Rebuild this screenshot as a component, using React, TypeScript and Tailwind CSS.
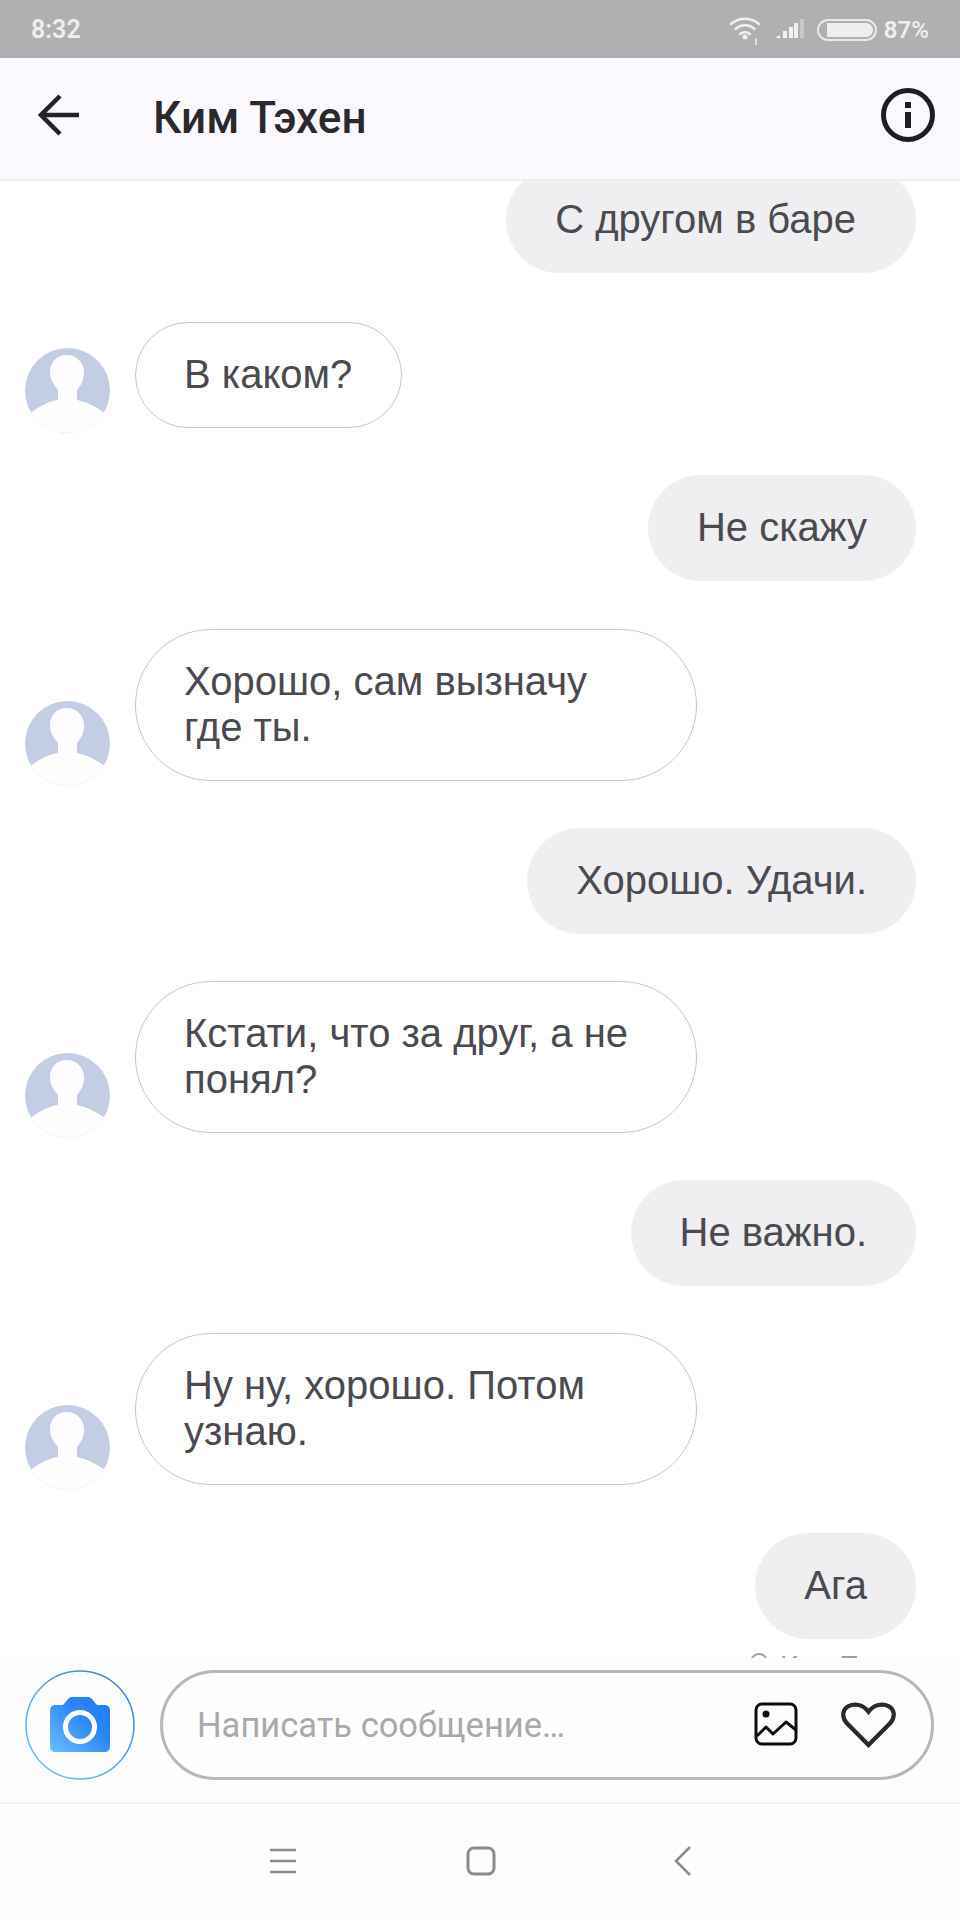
import React from 'react';

const font = { fontFamily: 'Roboto, "Noto Sans", sans-serif' };

type Message = { id: number; mine: boolean; text: string };

const messages: Message[] = [
  { id: 1, mine: true, text: 'С другом в баре' },
  { id: 2, mine: false, text: 'В каком?' },
  { id: 3, mine: true, text: 'Не скажу' },
  { id: 4, mine: false, text: 'Хорошо, сам вызначу где ты.' },
  { id: 5, mine: true, text: 'Хорошо. Удачи.' },
  { id: 6, mine: false, text: 'Кстати, что за друг, а не понял?' },
  { id: 7, mine: true, text: 'Не важно.' },
  { id: 8, mine: false, text: 'Ну ну, хорошо. Потом узнаю.' },
  { id: 9, mine: true, text: 'Ага' },
];

const Avatar = () => (
  <svg width="85" height="85" viewBox="0 0 85 85" className="shrink-0 mb-[-5px]">
    <defs>
      <clipPath id="avatar-clip">
        <circle cx="42.5" cy="42.5" r="42.5" />
      </clipPath>
    </defs>
    <circle cx="42.5" cy="42.5" r="42.5" fill="#c3cde3" />
    <path
      clipPath="url(#avatar-clip)"
      d="M41.500 7C31 7 25 15 25 24c0 7 3 12 8 18v10C24 53 15 58 4 66v19h77V66c-9-7-19-12-29-14V42c5-6 7-11 7-18 0-9-7-17-17.500-17z"
      fill="#fefdff"
    />
  </svg>
);

const StatusBar = () => (
  <div className="h-[58px] shrink-0 bg-[#b1afb2] flex items-center justify-between pt-[2px] pl-[31px] pr-[31px]">
    <span className="text-[25px] font-semibold text-[#efeef0]">8:32</span>
    <div className="flex items-center">
      <svg width="32" height="30" viewBox="0 0 32 30" fill="none" stroke="#f1f0f2" strokeWidth="2.500" strokeLinecap="round">
        <path d="M2 9c8-7 20-7 28 0" />
        <path d="M6.500 14c5.500-5 13.500-5 19 0" />
        <path d="M11 19c3-2.500 7-2.500 10 0" />
        <circle cx="16" cy="22" r="2.500" fill="#f1f0f2" stroke="none" />
        <path d="M27 24v6" strokeWidth="1.500" />
      </svg>
      <svg width="32" height="24" viewBox="0 0 32 24" className="ml-[13px]">
        <path d="M1 20l5-3v3z" fill="#f1f0f2" />
        <rect x="9" y="13" width="4" height="7" fill="#f1f0f2" />
        <rect x="15" y="9" width="4" height="11" fill="#f1f0f2" />
        <rect x="20" y="5" width="4" height="15" fill="#f1f0f2" />
        <rect x="26" y="1" width="4" height="19" fill="#c9c8cb" />
      </svg>
      <div className="ml-[11px] w-[60px] h-[22px] rounded-full border-2 border-[#e9e8ea] p-[2px] pl-[8px] flex">
        <div className="flex-1 bg-[#eeedef] rounded-r-full rounded-l-[3px]" />
      </div>
      <span className="ml-[7px] text-[24px] font-semibold text-[#efeef0]">87%</span>
    </div>
  </div>
);

const Header = () => (
  <div className="h-[123px] shrink-0 bg-[#fbf9fd] border-b-2 border-[#efeef1] flex items-center pl-[38px] pr-[24px] z-10">
    <svg width="42" height="42" viewBox="0 0 42 42" fill="none" stroke="#232226" strokeWidth="4.500" className="shrink-0 -mt-[8px]">
      <path d="M41 21H3" />
      <path d="M22 2L3 21l19 19" />
    </svg>
    <h1 className="ml-[73px] -mt-[2px] text-[44px] font-medium text-[#2a292d] flex-1">Ким Тэхен</h1>
    <svg width="56" height="56" viewBox="0 0 56 56" fill="none" className="shrink-0 -mt-[8px]">
      <circle cx="28" cy="28" r="24.500" stroke="#1e1d20" strokeWidth="5" />
      <rect x="25" y="15" width="6" height="6" fill="#1e1d20" />
      <rect x="25" y="25" width="6" height="16" fill="#1e1d20" />
    </svg>
  </div>
);

const Bubble = ({ message }: { message: Message }) =>
  message.mine ? (
    <div className={`flex justify-end pr-[44px] shrink-0 ${message.id === 1 ? 'mb-[2px]' : ''}`}>
      <div
        className={`h-[106px] pl-[49px] pb-[2px] flex items-center rounded-full bg-[#efeef1] text-[40px] text-[#4a4a50] font-['Liberation_Sans'] ${
          message.id === 1 ? 'pr-[60px]' : 'pr-[49px]'
        }`}
      >
        {message.text}
      </div>
    </div>
  ) : (
    <div className="flex items-end pl-[25px] shrink-0">
      <Avatar />
      <div className="ml-[25px] pl-[48px] pr-[49px] pt-[28px] pb-[30px] max-w-[562px] rounded-full border border-[#c6c5c9] bg-white text-[40px] leading-[46px] text-[#4a4a50] font-['Liberation_Sans']">
        {message.text}
      </div>
    </div>
  );

const Composer = () => (
  <div className="h-[146px] shrink-0 flex items-start pt-[12px] pl-[25px] pr-[26px] border-b-2 border-[#f2f1f3] bg-[#fefdfe]">
    <svg width="110" height="110" viewBox="0 0 110 110" fill="none" className="shrink-0">
      <defs>
        <linearGradient id="ring" x1="0" y1="1" x2="1" y2="0">
          <stop offset="0" stopColor="#6cc8fb" />
          <stop offset="1" stopColor="#2f7fd6" />
        </linearGradient>
        <linearGradient id="cam" x1="0" y1="1" x2="1" y2="0">
          <stop offset="0" stopColor="#6cbfff" />
          <stop offset="0.6" stopColor="#2b86f5" />
          <stop offset="1" stopColor="#1f7bf2" />
        </linearGradient>
      </defs>
      <circle cx="55" cy="55" r="54" stroke="url(#ring)" strokeWidth="1.500" />
      <path
        d="M31 35h7l5-6c1-1 2-2 4-2h16c2 0 3 1 4 2l5 6h7c4 0 6 2 6 6v35c0 4-2 6-6 6H31c-4 0-6-2-6-6V41c0-4 2-6 6-6z"
        fill="url(#cam)"
      />
      <circle cx="55" cy="57" r="14.500" stroke="#fff" strokeWidth="5" />
    </svg>
    <div className="ml-[25px] flex-1 h-[110px] rounded-full border-[3px] border-[#b7b6ba] flex items-center pl-[34px] pr-[35px]">
      <span className="flex-1 text-[34.500px] mt-[2px] text-[#a9a8ad]">Написать сообщение…</span>
      <svg width="44" height="44" viewBox="0 0 44 44" fill="none" stroke="#0d0d0f" strokeWidth="3" strokeLinejoin="round" className="shrink-0 -mt-[2px]">
        <rect x="2" y="2" width="40" height="40" rx="6" />
        <circle cx="12" cy="12" r="3.500" fill="#0d0d0f" stroke="none" />
        <path d="M3 34l9-9 7 7 13-12 10 8" />
      </svg>
      <svg width="55" height="48" viewBox="0 0 58 50" fill="none" stroke="#2a292d" strokeWidth="4.500" strokeLinejoin="miter" className="ml-[43px] shrink-0">
        <path d="M29 46L6 23C0 16 2 8 8 5c6-3 15-2 21 6 6-8 15-9 21-6 6 3 8 11 2 18z" />
      </svg>
    </div>
  </div>
);

const NavBar = () => (
  <div className="h-[116px] shrink-0 bg-[#fefdfe] flex items-start justify-center pt-[44px] text-[#8b8a8f]">
    <svg width="28" height="26" viewBox="0 0 28 26" fill="none" stroke="currentColor" strokeWidth="2.500">
      <path d="M1 2h26M1 13h26M1 24h26" />
    </svg>
    <svg width="30" height="30" viewBox="0 0 30 30" fill="none" stroke="currentColor" strokeWidth="3" className="ml-[169px] -mt-[2px]">
      <rect x="2" y="2" width="26" height="26" rx="6" />
    </svg>
    <svg width="18" height="30" viewBox="0 0 18 30" fill="none" stroke="currentColor" strokeWidth="2.500" className="ml-[178px] -mt-[2px]">
      <path d="M16 1L2 15l14 14" />
    </svg>
  </div>
);

const App: React.FC = () => {
  return (
    <div className="w-[960px] h-[1920px] flex flex-col bg-white overflow-hidden" style={font}>
      <StatusBar />
      <Header />
      <div className="flex-1 min-h-0 overflow-hidden flex flex-col gap-[47.2px] -mt-[14px]">
        {messages.map(message => (
          <Bubble key={message.id} message={message} />
        ))}
        {/* seen line, cut off by the composer */}
        <div className="flex items-start gap-[12px] pl-[750px] -mt-[40px] text-[28px] text-[#a0a0a4] whitespace-nowrap shrink-0">
          <span className="w-[18px] h-[18px] mt-[7px] rounded-full border-2 border-[#a0a0a4]" />
          Ким Тэхен
        </div>
      </div>
      <Composer />
      <NavBar />
    </div>
  );
};

export default App;
